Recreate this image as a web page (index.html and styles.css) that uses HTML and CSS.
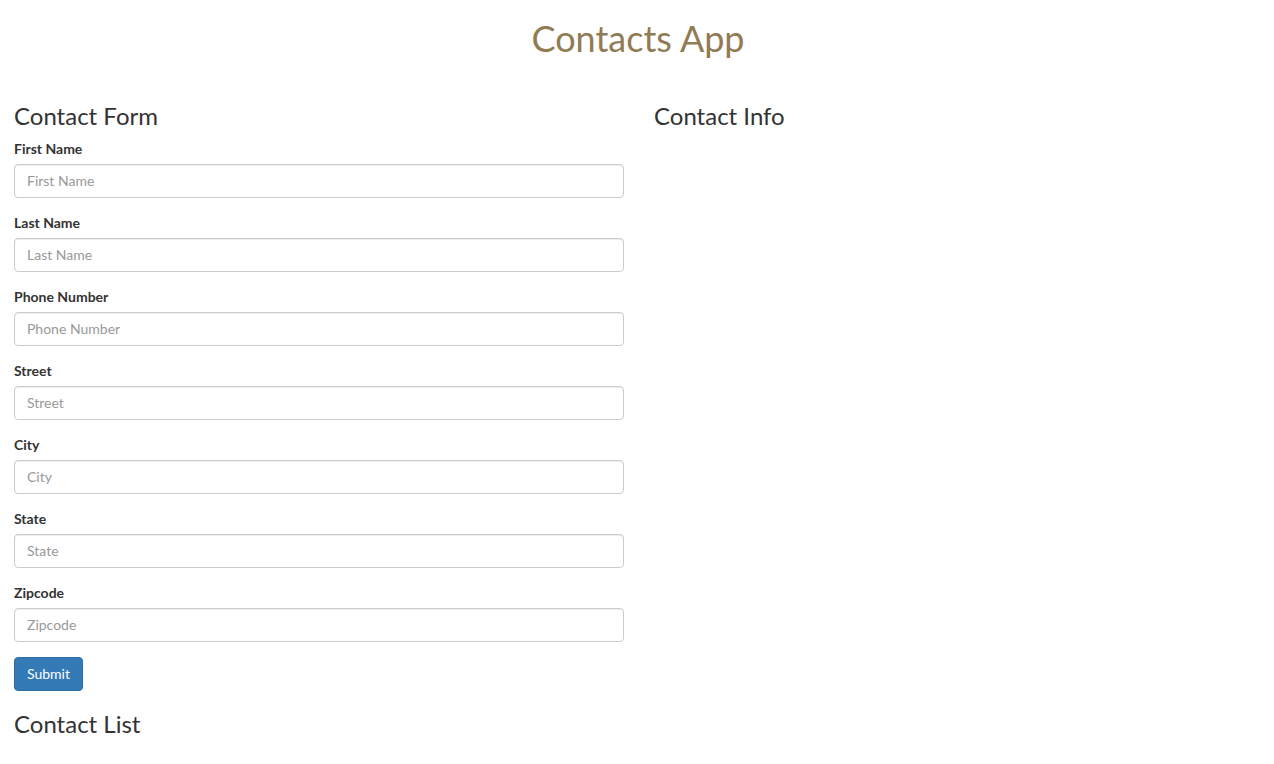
FILE: index.html
```html
<!DOCTYPE html>
<html>
<head>
<meta charset="utf-8">
<link rel="stylesheet" href="styles.css">
</head>
<body>
<h1 class="title">Contacts App</h1>
<div class="row">
  <div class="col">
    <h3 class="heading">Contact Form</h3>
    <form class="form">
      <div class="form-group"><label>First Name</label><input class="form-control" placeholder="First Name"></div>
      <div class="form-group"><label>Last Name</label><input class="form-control" placeholder="Last Name"></div>
      <div class="form-group"><label>Phone Number</label><input class="form-control" placeholder="Phone Number"></div>
      <div class="form-group"><label>Street</label><input class="form-control" placeholder="Street"></div>
      <div class="form-group"><label>City</label><input class="form-control" placeholder="City"></div>
      <div class="form-group"><label>State</label><input class="form-control" placeholder="State"></div>
      <div class="form-group"><label>Zipcode</label><input class="form-control" placeholder="Zipcode"></div>
      <button type="button" class="btn">Submit</button>
    </form>
    <h3 class="heading">Contact List</h3>
  </div>
  <div class="col">
    <h3 class="heading">Contact Info</h3>
  </div>
</div>
</body>
</html>
```
FILE: styles.css
```css
* { box-sizing: border-box; }
html, body { margin: 0; padding: 0; }
body {
  font-family: Lato, "Helvetica Neue", Arial, sans-serif;
  font-size: 14px;
  line-height: 1.42857;
  color: #333;
  background: #fff;
}
.title {
  margin: 19px 0 0;
  padding-left: 2px;
  text-align: center;
  font-size: 36px;
  font-weight: 400;
  line-height: 1.1;
  color: #917b55;
}
.row {
  display: grid;
  grid-template-columns: 610px 610px;
  column-gap: 30px;
  padding: 0 14px;
  margin-top: 44px;
}
.heading {
  margin: 0 0 10px;
  font-size: 24px;
  font-weight: 400;
  line-height: 1.1;
  color: #333;
}
.form .form-group { margin-bottom: 15px; }
.form label {
  display: block;
  margin-bottom: 5px;
  font-weight: 700;
  line-height: 20px;
}
.form-control {
  display: block;
  width: 100%;
  height: 34px;
  padding: 6px 12px;
  font-family: inherit;
  font-size: 14px;
  line-height: 1.42857;
  color: #555;
  background: #fff;
  border: 1px solid #ccc;
  border-radius: 4px;
  box-shadow: inset 0 1px 1px rgba(0,0,0,.075);
}
.form-control::placeholder { color: #999; }
.btn {
  display: inline-block;
  padding: 6px 12px;
  font-family: inherit;
  font-size: 14px;
  line-height: 1.42857;
  color: #fff;
  background: #337ab7;
  border: 1px solid #2e6da4;
  border-radius: 4px;
}
.form + .heading { margin-top: 20px; }
```
